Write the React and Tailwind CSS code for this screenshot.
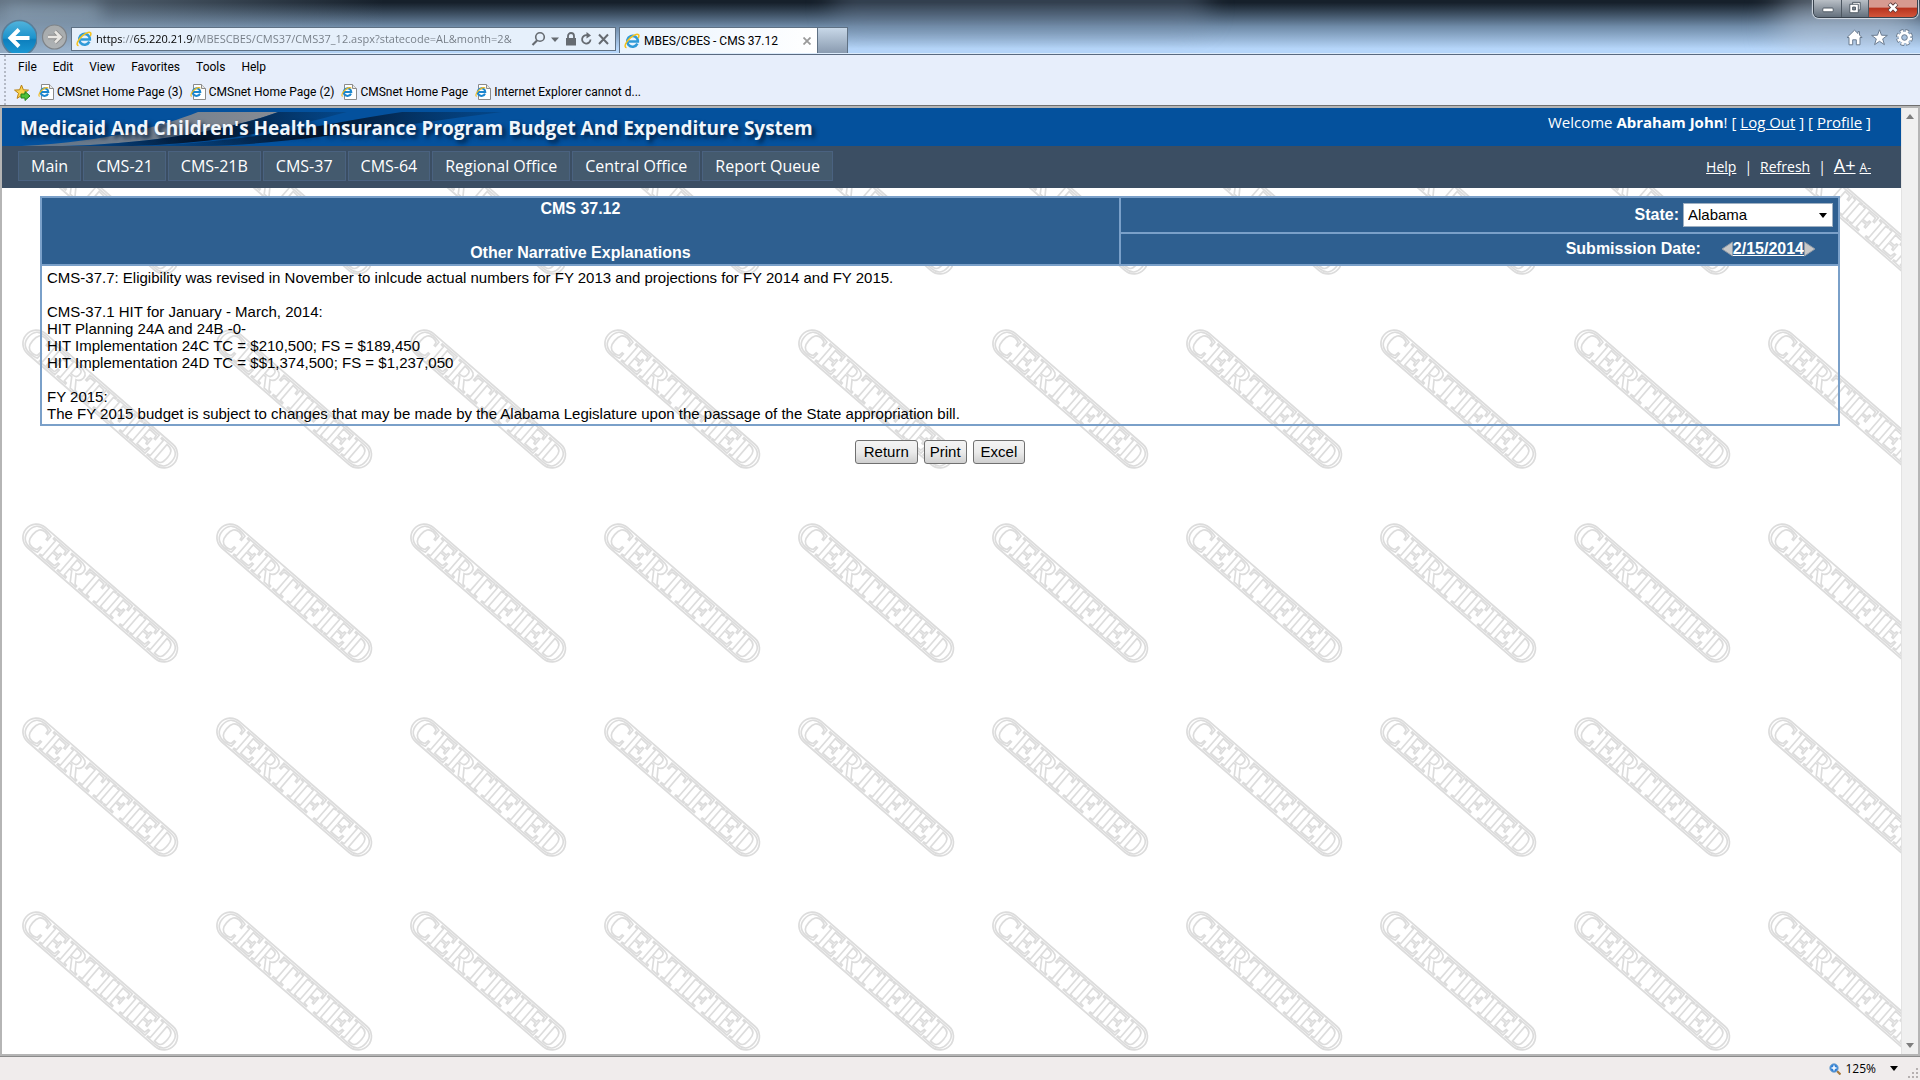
import { useState } from "react";

const favorites = [
  "CMSnet Home Page (3)",
  "CMSnet Home Page (2)",
  "CMSnet Home Page",
  "Internet Explorer cannot d...",
];

const menus = ["File", "Edit", "View", "Favorites", "Tools", "Help"];

const navItems = [
  "Main",
  "CMS-21",
  "CMS-21B",
  "CMS-37",
  "CMS-64",
  "Regional Office",
  "Central Office",
  "Report Queue",
];

const narrative = `CMS-37.7: Eligibility was revised in November to inlcude actual numbers for FY 2013 and projections for FY 2014 and FY 2015.

CMS-37.1 HIT for January - March, 2014:
HIT Planning 24A and 24B -0-
HIT Implementation 24C TC = $210,500; FS = $189,450
HIT Implementation 24D TC = $$1,374,500; FS = $1,237,050

FY 2015:
The FY 2015 budget is subject to changes that may be made by the Alabama Legislature upon the passage of the State appropriation bill.`;

function IeIcon({ className }) {
  return (
    <svg viewBox="0 0 16 16" className={className} aria-hidden="true">
      <path
        d="M13.4 10.6A5.4 5.4 0 1 1 13.9 8.6H4.6"
        fill="none"
        stroke="#2f9ad8"
        strokeWidth="2.5"
      />
      <path
        d="M2.6 14.6C-.6 14.5 1.7 8.6 6.6 4.6 10.4 1.4 14.6.3 14.9 2.5c.1.8-.2 1.7-.7 2.6"
        fill="none"
        stroke="#f5c21b"
        strokeWidth="1.5"
      />
    </svg>
  );
}

function PageIcon() {
  return (
    <svg viewBox="0 0 16 16" className="size-4 shrink-0" aria-hidden="true">
      <path d="M3.5.5h8l4 4v11h-12z" fill="#fff" stroke="#8b8b8b" />
      <path d="M11.5.5v4h4" fill="#e8e8e8" stroke="#8b8b8b" />
      <path d="M10 9.6A3.8 3.8 0 1 1 10.3 8H3.5" fill="none" stroke="#1c86cf" strokeWidth="2" />
      <path d="M1.6 12.4C-.3 11.5 2 7.5 5 5.3 7.5 3.5 10 3 10.2 4.4" fill="none" stroke="#f0bb1d" strokeWidth="1.1" />
    </svg>
  );
}

function TitleBar() {
  const [address, setAddress] = useState(
    "https://65.220.21.9/MBESCBES/CMS37/CMS37_12.aspx?statecode=AL&month=2&"
  );

  return (
    <div className="relative flex h-[54px] shrink-0 items-end overflow-hidden border-b border-[#dcebfb] bg-linear-to-b from-[#16202b] from-5% via-[#6f8ba8] via-50% to-[#b6d6fa] to-92% font-['Roboto','Open_Sans',sans-serif]">
      {/* glass reflections */}
      <div className="absolute inset-y-0 left-0 w-96 bg-linear-to-r from-[#8497a9]/70 to-transparent" />
      <div className="absolute -top-4 left-[830px] h-12 w-[380px] rounded-full bg-[#7d93ab]/30 blur-md" />
      <div className="absolute -top-2 right-0 h-16 w-36 rounded-full bg-[#c3d2e4]/50 blur-lg" />
      <div className="absolute top-1 left-1 h-4 w-24 bg-[#9fb7cd]/50 blur-sm" />

      <div className="relative flex h-[34px] w-full items-start">
        <button aria-label="Back" className="size-[37px] shrink-0">
          <svg viewBox="0 0 37 37" className="size-[37px]">
            <defs>
              <linearGradient id="back" x1="0" y1="0" x2="0" y2="1">
                <stop offset="0" stopColor="#53b4dc" />
                <stop offset=".5" stopColor="#1d93cc" />
                <stop offset=".55" stopColor="#0d7fbd" />
                <stop offset="1" stopColor="#1d9bd6" />
              </linearGradient>
            </defs>
            <circle cx="19.5" cy="19" r="17.5" fill="url(#back)" stroke="#5a7d97" strokeWidth="1.5" />
            <path d="M19 10.5 10.5 19 19 27.5M11 19H29.5" fill="none" stroke="#fff" strokeWidth="4" />
          </svg>
        </button>
        <button aria-label="Forward" className="mt-1 ml-1 size-[27px] shrink-0">
          <svg viewBox="0 0 27 27" className="size-[27px]">
            <circle cx="13.5" cy="14" r="12" fill="#b6b3ad" fillOpacity=".75" stroke="#7e8388" strokeWidth="1.2" />
            <path d="M14 8.5 19.5 14 14 19.5M7 14H19" fill="none" stroke="#8d8d8d" strokeWidth="4.5" />
            <path d="M14 8.5 19.5 14 14 19.5M7 14H19" fill="none" stroke="#e9e7e3" strokeWidth="2.5" />
          </svg>
        </button>

        <div className="mt-2 ml-[3px] flex h-6 w-[545px] shrink-0 items-center border border-[#5f7184] bg-[#e6f0fb] pr-0.5 pl-1">
          <IeIcon className="size-4 shrink-0" />
          {/* hard stops darken the scheme and the host */}
          <input
            type="text"
            aria-label="Address"
            value={address}
            onChange={(e) => setAddress(e.target.value)}
            className="ml-1 min-w-0 flex-1 bg-[linear-gradient(to_right,#000_27px,#737b84_27px_38px,#000_38px_97px,#737b84_97px)] bg-clip-text font-['Open_Sans',sans-serif] text-[11px] text-transparent caret-black outline-none"
          />
          <svg viewBox="0 0 82 16" className="ml-1 h-4 w-[82px] shrink-0" fill="none" stroke="#666b71" aria-hidden="true">
            <circle cx="9" cy="6" r="4.3" strokeWidth="1.6" />
            <path d="M6 9.5 1.5 14" strokeWidth="2.2" />
            <path d="M20 6.5h8l-4 4.5z" fill="#666b71" stroke="none" />
            <path d="M35 7h10v7.5H35z" fill="#666b71" stroke="none" />
            <path d="M37 7V5a3 3 0 0 1 6 0v2" strokeWidth="1.8" />
            <path d="M59.5 8.5A4.2 4.2 0 1 1 56 4.2" strokeWidth="1.8" />
            <path d="M55.5 1 60 4.5 55.5 7.5z" fill="#666b71" stroke="none" />
            <path d="m68 3.5 9 9.5M77 3.5 68 13" strokeWidth="2" />
          </svg>
        </div>

        <div className="mt-2 ml-[3px] flex h-[26px] w-[199px] shrink-0 items-center border border-b-0 border-[#5f7184] bg-linear-to-r from-[#e9f3fd] to-white pr-1.5 pl-1">
          <IeIcon className="size-4 shrink-0" />
          <span className="ml-1 flex-1 truncate text-xs text-black">MBES/CBES - CMS 37.12</span>
          <button aria-label="Close tab" className="text-[#9a9a9a]">
            <svg viewBox="0 0 8 8" className="size-2" stroke="currentColor" strokeWidth="1.8">
              <path d="m.5.5 7 7M7.5.5l-7 7" />
            </svg>
          </button>
        </div>
        <button
          aria-label="New tab"
          className="mt-2 h-[26px] w-[30px] shrink-0 border border-b-0 border-l-0 border-[#5f7184] bg-linear-to-b from-[#c8d8e8] to-[#8a9bb0]"
        />

        <div className="mt-2.5 mr-[7px] ml-auto flex gap-2">
          <button aria-label="Home">
            <svg viewBox="0 0 17 17" className="size-[17px]" fill="#fff" stroke="#6b7c90" strokeLinejoin="round">
              <path d="M8.5 1.2 1 8.5h2v7.3h3.7v-5h3.6v5H14V8.5h2L13.5 6V2.5H12v2z" />
            </svg>
          </button>
          <button aria-label="Favorites center">
            <svg viewBox="0 0 17 17" className="size-[17px]" fill="#fff" stroke="#6b7c90" strokeLinejoin="round">
              <path d="m8.5.8 2 5.4 5.9.2-4.7 3.5 1.7 5.7-4.9-3.3-4.9 3.3 1.7-5.7L.6 6.4l5.9-.2z" />
            </svg>
          </button>
          <button aria-label="Tools">
            <svg viewBox="0 0 17 17" className="size-[17px]">
              <circle cx="8.5" cy="8.5" r="6.5" fill="none" stroke="#6b7c90" strokeWidth="4" strokeDasharray="3.4 1.7" />
              <circle cx="8.5" cy="8.5" r="6.3" fill="none" stroke="#fff" strokeWidth="2.6" strokeDasharray="2.5 2.45" strokeDashoffset="-.4" />
              <circle cx="8.5" cy="8.5" r="4.3" fill="#a9c3df" stroke="#fff" strokeWidth="3" />
              <circle cx="8.5" cy="8.5" r="2.8" fill="none" stroke="#6b7c90" />
            </svg>
          </button>
        </div>
      </div>

      {/* window buttons sit over the glass */}
      <div className="absolute top-0 right-0.5 flex h-[18px] overflow-hidden rounded-b-md border border-t-0 border-[#39434e] shadow-[0_0_1px_1px_#d5dde6]">
        <button aria-label="Minimize" className="flex w-7 justify-center border-r border-[#4d5761] bg-linear-to-b from-[#b9bfc6] to-[#64707d]">
          <svg viewBox="0 0 14 18" className="w-3.5">
            <rect x="1.5" y="8.5" width="11" height="4" rx="1" fill="#fff" stroke="#4a5560" />
          </svg>
        </button>
        <button aria-label="Restore" className="flex w-[27px] justify-center border-r border-[#4d5761] bg-linear-to-b from-[#b9bfc6] to-[#64707d]">
          <svg viewBox="0 0 14 18" className="w-3.5" fill="#fff" stroke="#4a5560">
            <path d="M4.5 2.5h8v8h-8z" />
            <path d="M1.5 4.5h9v9h-9z" />
            <path d="M4.5 7.5h3v3h-3z" fill="#7c8791" />
          </svg>
        </button>
        <button aria-label="Close" className="flex w-12 justify-center bg-linear-to-b from-[#d79a90] from-40% via-[#b8341f] via-50% to-[#d3553a]">
          <svg viewBox="0 0 14 18" className="w-3.5">
            <path d="m3 4 8 8M11 4l-8 8" stroke="#5a3a3a" strokeWidth="4.6" />
            <path d="m3.3 4.3 7.4 7.4M10.7 4.3l-7.4 7.4" stroke="#fff" strokeWidth="2.8" />
          </svg>
        </button>
      </div>
    </div>
  );
}

function Toolbars() {
  return (
    <div className="flex shrink-0 flex-col border-t border-b border-t-[#5a6a80] border-b-[#6f6f6f] bg-[#e7eefb] font-['Roboto','Open_Sans',sans-serif] text-xs text-black">
      <div className="ml-1 flex flex-col border-l-2 border-dotted border-[#b4bac6] pl-3">
        <div className="flex h-6 items-center gap-4">
          {menus.map((menu) => (
            <button key={menu}>{menu}</button>
          ))}
        </div>
        <div className="-ml-1 flex h-[26px] items-center gap-[7px]">
          <button aria-label="Add to favorites bar">
            <svg viewBox="0 0 17 17" className="size-[17px]">
              <path
                d="m7.5 1 1.9 4.8 5.1.3-4 3.2 1.4 5.1-4.4-2.9-4.4 2.9 1.4-5.1-4-3.2 5.1-.3z"
                fill="#fbd24a"
                stroke="#b98316"
              />
              <path d="M7 10h4V7.5l5 4.5-5 4.5V14H7z" fill="#4fc03a" stroke="#22801c" />
            </svg>
          </button>
          {favorites.map((title) => (
            <a key={title} href="#" className="flex items-center gap-[3px] whitespace-nowrap">
              <PageIcon />
              {title}
            </a>
          ))}
        </div>
      </div>
    </div>
  );
}

function Watermark() {
  return (
    <svg className="absolute inset-0 size-full" aria-hidden="true">
      <defs>
        <pattern id="certified" width="194" height="194" patternUnits="userSpaceOnUse">
          <g transform="translate(98.2 97) rotate(41)" fill="#fff" stroke="#dcdcdc">
            <rect x="-98" y="-13.5" width="196" height="27" rx="13.5" strokeWidth="1.7" />
            <text
              y="11.5"
              textAnchor="middle"
              strokeWidth="1.6"
              className="font-['Liberation_Serif',serif] text-[35px] font-bold"
            >
              CERTIFIED
            </text>
          </g>
        </pattern>
      </defs>
      <rect width="100%" height="100%" fill="url(#certified)" />
    </svg>
  );
}

function SiteHeader() {
  return (
    <header className="relative text-white">
      <div className="relative flex h-[38px] items-start justify-between bg-[#04519d] pr-[30px] pl-[18px]">
        <svg viewBox="0 0 600 34" className="absolute bottom-0 left-0 h-[34px] w-[600px]" aria-hidden="true">
          <defs>
            <linearGradient id="fadeDark" x1="0" x2="1">
              <stop offset="0" stopColor="#061a33" stopOpacity="0" />
              <stop offset=".5" stopColor="#041226" />
              <stop offset="1" stopColor="#03305f" stopOpacity=".3" />
            </linearGradient>
            <linearGradient id="fadeGray" x1="0" x2="1">
              <stop offset="0" stopColor="#5f7388" />
              <stop offset="1" stopColor="#868b93" />
            </linearGradient>
          </defs>
          <path d="M20 34C110 29 160 14 196 0H276C230 17 150 32 60 34z" fill="url(#fadeGray)" />
          <path d="M60 34C150 32 230 17 276 0H345C290 14 240 30 130 34z" fill="url(#fadeDark)" />
          <path d="M130 34C250 31 330 10 400 0H500C400 12 290 33 200 34z" fill="url(#fadeDark)" />
        </svg>
        <h1 className="relative mt-1.5 font-['Open_Sans',sans-serif] text-[19px] leading-7 font-bold whitespace-nowrap text-[#f1f6fb] [text-shadow:3px_3px_4px_#021c3b]">
          Medicaid And Children's Health Insurance Program Budget And Expenditure System
        </h1>
        <p className="relative mt-0.5 text-[15px] leading-6 whitespace-nowrap">
          Welcome <b>Abraham John</b>! [{" "}
          <a href="#" className="underline">
            Log Out
          </a>{" "}
          ] [{" "}
          <a href="#" className="underline">
            Profile
          </a>{" "}
          ]
        </p>
      </div>
      <div className="flex items-start justify-between bg-[#3b4e63] pt-[5px] pr-[30px] pb-[7px] pl-4">
        <nav className="flex gap-0.5 text-base leading-7">
          {navItems.map((item) => (
            <a key={item} href="#" className="border border-[#4a6280] bg-[#445a6e] px-3 whitespace-nowrap">
              {item}
            </a>
          ))}
        </nav>
        <div className="flex items-baseline text-sm leading-7">
          <a href="#" className="underline">
            Help
          </a>
          <span className="px-2">|</span>
          <a href="#" className="underline">
            Refresh
          </a>
          <span className="px-2">|</span>
          <a href="#" className="text-lg leading-7 underline">
            A+
          </a>
          <a href="#" className="ml-1 text-xs underline">
            A-
          </a>
        </div>
      </div>
    </header>
  );
}

function NarrativeTable() {
  const [state, setState] = useState("Alabama");

  return (
    <table className="w-full border-collapse border-2 border-[#7aa0c9] font-['Liberation_Sans',Arial,sans-serif]">
      <tbody>
        <tr className="bg-[#2e5f90] text-base leading-[22px] font-bold text-white">
          <th rowSpan={2} className="w-3/5 border-2 border-[#7aa0c9] p-0">
            CMS 37.12
            <br />
            <br />
            Other Narrative Explanations
          </th>
          <td className="h-[35px] border-2 border-[#7aa0c9] p-0 pr-[5px]">
            <div className="flex items-center justify-end gap-1">
              <label htmlFor="state">State:</label>
              <div className="relative">
                <select
                  id="state"
                  value={state}
                  onChange={(e) => setState(e.target.value)}
                  className="h-6 w-[150px] appearance-none border border-[#9fb0c2] bg-white pl-1 text-[15px] leading-5 font-normal text-black"
                >
                  <option>Alabama</option>
                </select>
                <svg viewBox="0 0 8 5" className="pointer-events-none absolute top-2.5 right-1.5 h-[5px] w-2">
                  <path d="M0 0h8L4 5z" />
                </svg>
              </div>
            </div>
          </td>
        </tr>
        <tr className="bg-[#2e5f90] text-base font-bold text-white">
          <td className="h-8 border-2 border-[#7aa0c9] p-0 pr-[22px]">
            <div className="flex items-center justify-end leading-5">
              <span className="mr-5">Submission Date:</span>
              <button aria-label="Previous submission">
                <svg viewBox="0 0 12 16" className="h-4 w-3">
                  <path d="M11.5 1v14L1 8z" fill="#c8c8c8" stroke="#8e99a5" />
                </svg>
              </button>
              <a href="#" className="underline">
                2/15/2014
              </a>
              <button aria-label="Next submission">
                <svg viewBox="0 0 12 16" className="h-4 w-3">
                  <path d="M.5 1v14L11 8z" fill="#c8c8c8" stroke="#8e99a5" />
                </svg>
              </button>
            </div>
          </td>
        </tr>
        <tr>
          <td
            colSpan={2}
            className="border-2 border-[#7aa0c9] px-[5px] pt-[3px] pb-0.5 text-[15px] leading-[17px] whitespace-pre-line text-black"
          >
            {narrative}
          </td>
        </tr>
      </tbody>
    </table>
  );
}

function ScrollBar() {
  return (
    <div className="flex w-[17px] shrink-0 flex-col items-center justify-between border-l border-[#e3e3e3] bg-[#f0f0f0] py-1.5">
      <svg viewBox="0 0 8 5" className="h-[5px] w-2">
        <path d="M0 5h8L4 0z" fill="#7d7d7d" />
      </svg>
      <svg viewBox="0 0 8 5" className="h-[5px] w-2">
        <path d="M0 0h8L4 5z" fill="#7d7d7d" />
      </svg>
    </div>
  );
}

function StatusBar() {
  return (
    <footer className="flex h-[23px] shrink-0 items-center justify-end bg-[#f0ecec] pr-0.5 text-xs text-black">
      <button className="flex items-center gap-1">
        <svg viewBox="0 0 12 12" className="size-3">
          <path d="m8 8 3.5 3.5" stroke="#a87a3e" strokeWidth="2.2" />
          <circle cx="5" cy="5" r="4.2" fill="#2f7fd6" stroke="#7fa9cf" />
          <path d="M5 2.5v5M2.5 5h5" stroke="#fff" strokeWidth="1.5" />
        </svg>
        125%
        <svg viewBox="0 0 8 5" className="ml-2.5 h-[5px] w-2">
          <path d="M0 0h8L4 5z" />
        </svg>
      </button>
      <svg viewBox="0 0 10 10" className="mt-2 ml-2.5 size-2.5" fill="#b5b0b0" aria-hidden="true">
        <path d="M8 0h2v2H8zM4 4h2v2H4zM8 4h2v2H8zM0 8h2v2H0zM4 8h2v2H4zM8 8h2v2H8z" />
      </svg>
    </footer>
  );
}

export default function App() {
  return (
    <div className="flex h-screen flex-col overflow-hidden bg-white font-['Open_Sans','Noto_Sans',sans-serif]">
      <TitleBar />
      <Toolbars />
      <div className="flex min-h-0 flex-1 border-2 border-[#b5b5b5]">
        <main className="relative min-w-0 flex-1 overflow-hidden bg-white">
          <Watermark />
          <SiteHeader />
          <div className="relative pt-2 pr-[61px] pl-[38px]">
            <NarrativeTable />
            <div className="mt-3.5 flex justify-center gap-1.5 font-['Liberation_Sans',Arial,sans-serif] text-[15px] leading-[22px] text-black">
              {["Return", "Print", "Excel"].map((label) => (
                <button
                  key={label}
                  className="rounded-[3px] border border-[#707070] bg-linear-to-b from-[#f4f4f4] via-[#ebebeb] to-[#cfcfcf] px-[5px] first:px-2 last:px-[7px]"
                >
                  {label}
                </button>
              ))}
            </div>
          </div>
        </main>
        <ScrollBar />
      </div>
      <div className="h-px shrink-0 bg-[#8b8b8b]" />
      <StatusBar />
    </div>
  );
}
